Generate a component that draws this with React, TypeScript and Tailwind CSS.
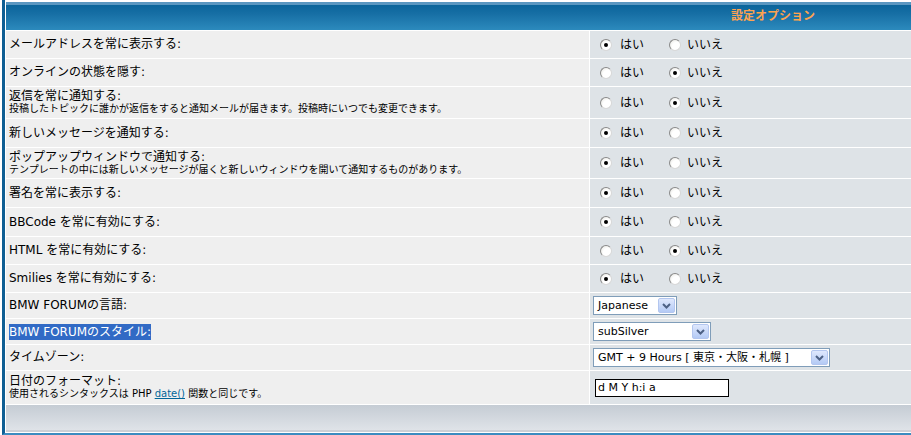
import React from "react";

const font = "font-['DejaVu_Sans','Noto_Sans_CJK_JP',sans-serif]";

type RadioRow = { label: string; note?: string; yes: boolean; h: string };

const radioRows: RadioRow[] = [
  { label: "メールアドレスを常に表示する:", yes: true, h: "h-[27px]" },
  { label: "オンラインの状態を隠す:", yes: false, h: "h-[27px]" },
  {
    label: "返信を常に通知する:",
    note: "投稿したトピックに誰かが返信をすると通知メールが届きます。投稿時にいつでも変更できます。",
    yes: false,
    h: "h-[31px]",
  },
  { label: "新しいメッセージを通知する:", yes: true, h: "h-[28px]" },
  {
    label: "ポップアップウィンドウで通知する:",
    note: "テンプレートの中には新しいメッセージが届くと新しいウィンドウを開いて通知するものがあります。",
    yes: true,
    h: "h-[30px]",
  },
  { label: "署名を常に表示する:", yes: true, h: "h-[28px]" },
  { label: "BBCode を常に有効にする:", yes: true, h: "h-[28px]" },
  { label: "HTML を常に有効にする:", yes: false, h: "h-[27px]" },
  { label: "Smilies を常に有効にする:", yes: true, h: "h-[27px]" },
];

function Radio({ on }: { on: boolean }) {
  return (
    <span className="flex h-[12px] w-[12px] shrink-0 items-center justify-center rounded-full border border-[#8a8a8a] border-r-[#d8d8d8] border-b-[#d8d8d8] bg-[radial-gradient(circle_at_65%_65%,#ffffff_45%,#e2e2dc_100%)]">
      {on && <span className="h-[4px] w-[4px] rounded-full bg-black" />}
    </span>
  );
}

function Chevron() {
  return (
    <svg width="9" height="6" viewBox="0 0 9 6">
      <path d="M1 1 L4.5 4.5 L8 1" fill="none" stroke="#4d6185" strokeWidth="2" />
    </svg>
  );
}

function Select({ w, label }: { w: string; label: string }) {
  return (
    <div className={`flex h-[19px] items-center border border-[#7f9db9] bg-white ${w}`}>
      <span className="flex-1 overflow-hidden whitespace-nowrap pl-[4px] text-[11px] leading-[17px] text-black">
        {label}
      </span>
      <span className="mr-px flex h-[15px] w-[17px] items-center justify-center rounded-[2px] border border-[#b3c6ef] bg-gradient-to-b from-[#dfe8fd] to-[#b4caf5]">
        <Chevron />
      </span>
    </div>
  );
}

function Row({
  h,
  left,
  right,
  rightPad = "pl-[10px]",
}: {
  h: string;
  left: React.ReactNode;
  right: React.ReactNode;
  rightPad?: string;
}) {
  return (
    <div className={`grid grid-cols-[583px_1fr] gap-px ${h}`}>
      <div className="flex flex-col justify-center bg-[#efefef] pl-[3px] text-black">{left}</div>
      <div className={`flex items-center bg-[#dee3e7] ${rightPad}`}>{right}</div>
    </div>
  );
}

function Label({ text, note }: { text: React.ReactNode; note?: React.ReactNode }) {
  return (
    <>
      <span className="text-[12px] leading-[13px]">{text}</span>
      {note && <span className="text-[10px] leading-[12px]">{note}</span>}
    </>
  );
}

export default function App() {
  return (
    <div className={`h-[435px] w-[911px] overflow-hidden bg-white pl-[2px] ${font}`}>
      <div className="flex h-full flex-col gap-px border-b-[2px] border-l-[3px] border-b-[#3b8cc0] border-l-[#0f5f94] bg-white pb-px pl-px pt-[2px]">
        {/* header */}
        <div className="flex h-[28px] shrink-0 items-center bg-[linear-gradient(to_bottom,#5a97c1_0px,#5a97c1_3px,#0a659b_3px,#176fa5_12px,#2c8abd_28px)] pl-[725px]">
          <span className="text-[12px] font-bold text-[#ffa34f]">設定オプション</span>
        </div>

        {radioRows.map((r) => (
          <Row
            key={r.label}
            h={r.h}
            left={<Label text={r.label} note={r.note} />}
            right={
              <div className="flex items-center text-[12px] text-black">
                <Radio on={r.yes} />
                <span className="ml-[8px] w-[24px]">はい</span>
                <span className="ml-[25px]">
                  <Radio on={!r.yes} />
                </span>
                <span className="ml-[6px]">いいえ</span>
              </div>
            }
          />
        ))}

        <Row
          h="h-[25px]"
          rightPad="pl-[3px]"
          left={<Label text="BMW FORUMの言語:" />}
          right={<Select w="w-[84px]" label="Japanese" />}
        />
        <Row
          h="h-[25px]"
          rightPad="pl-[3px]"
          left={
            <div className="flex">
              <span className="bg-[#316ac5] text-[12px] leading-[16px] text-white">BMW FORUMのスタイル:</span>
            </div>
          }
          right={<Select w="w-[118px]" label="subSilver" />}
        />
        <Row
          h="h-[25px]"
          rightPad="pl-[3px]"
          left={<Label text="タイムゾーン:" />}
          right={<Select w="w-[237px]" label="GMT + 9 Hours [ 東京・大阪・札幌 ]" />}
        />
        <Row
          h="h-[33px]"
          rightPad="pl-[5px]"
          left={
            <Label
              text="日付のフォーマット:"
              note={
                <>
                  使用されるシンタックスは PHP{" "}
                  <a href="#" className="text-[#006699] underline">
                    date()
                  </a>{" "}
                  関数と同じです。
                </>
              }
            />
          }
          right={
            <input
              readOnly
              defaultValue="d M Y h:i a"
              className="h-[18px] w-[134px] border border-black bg-white pl-[2px] text-[11px] text-black outline-none"
            />
          }
        />

        {/* footer bar */}
        <div className="h-[27px] shrink-0 bg-[linear-gradient(to_bottom,#c5ccd4_0px,#dfe3e8_25px,#cbd0d6_25px,#cbd0d6_27px)]" />
      </div>
    </div>
  );
}
